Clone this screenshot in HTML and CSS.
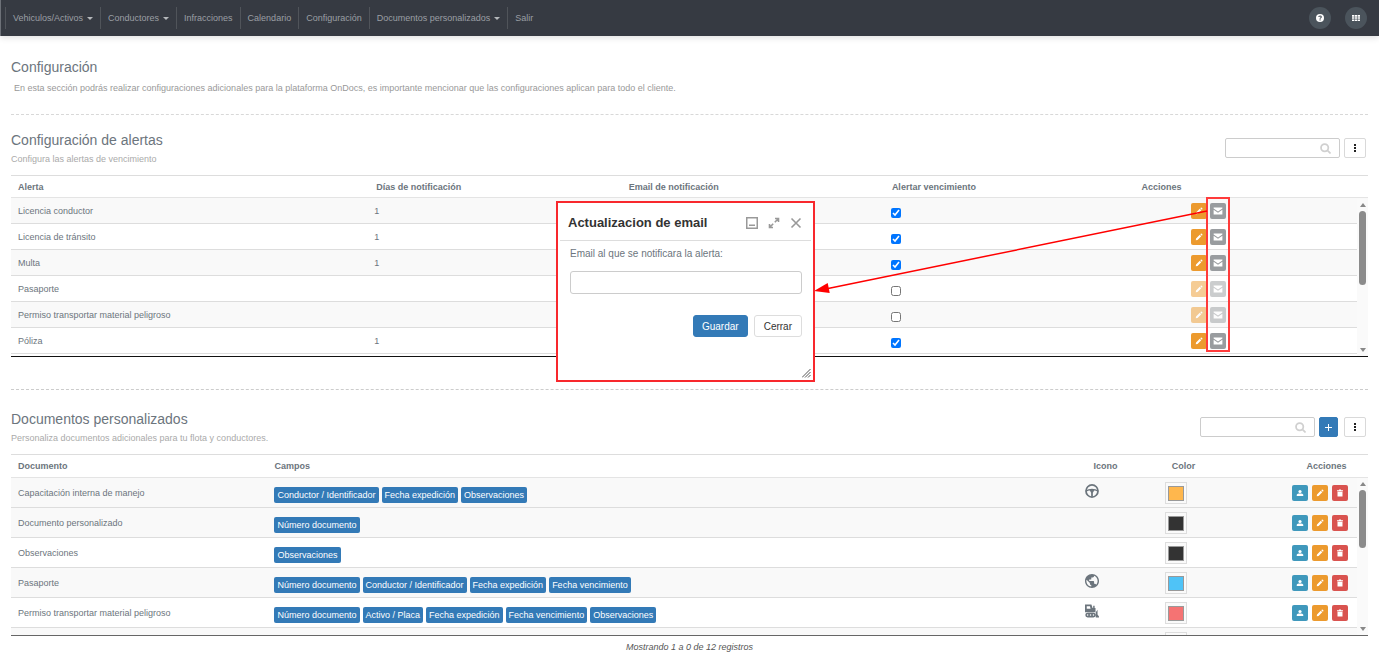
FILE: index.html
```html
<!DOCTYPE html>
<html lang="es">
<head>
  <meta charset="UTF-8">
  <meta name="viewport" content="width=device-width, initial-scale=1.0">
  <title>Configuración</title>
  <link rel="stylesheet" href="styles.css">
</head>
<body>

  <!-- Icons -->
  <svg class="sprite" aria-hidden="true">
    <symbol id="i-pencil" viewBox="0 0 16 16"><path d="M1.500 14.500l.6-3.600 7.400-7.400 3 3-7.400 7.400zM10.600 2.400l1-1c.5-.5 1.200-.5 1.700 0l1.300 1.300c.5.5.5 1.200 0 1.700l-1 1z"/></symbol>
    <symbol id="i-mail" viewBox="0 0 16 16"><path d="M1 2.500h14v1.600L8 8.800 1 4.100zM1 6l7 4.600L15 6v7.500H1z"/></symbol>
    <symbol id="i-user" viewBox="0 0 16 16"><circle cx="8" cy="5" r="3.200"/><path d="M1.500 14v-2.500C1.500 9.500 5 9 8 9s6.500.5 6.500 2.500V14z"/></symbol>
    <symbol id="i-trash" viewBox="0 0 16 16"><path d="M2 2.500h3.500l.6-1.300h3.800l.6 1.300H14v2.200H2zM3 5.500h10V15H3z"/></symbol>
    <symbol id="i-dots" viewBox="0 0 8 8"><rect x="3" y="0" width="2" height="2"/><rect x="3" y="3" width="2" height="2"/><rect x="3" y="6" width="2" height="2"/></symbol>
    <symbol id="i-search" viewBox="0 0 16 16"><path d="M6.800 1.500a5.300 5.300 0 1 0 0 10.600 5.300 5.300 0 0 0 0-10.600zM10.700 10.700l3.800 3.800" fill="none" stroke="currentColor" stroke-width="2.600" stroke-linecap="round"/></symbol>
    <symbol id="i-wheel" viewBox="0 0 24 24"><circle cx="12" cy="12" r="10.300" fill="none" stroke="currentColor" stroke-width="3"/><path d="M2 12c5-3.600 15-3.600 20 0" fill="none" stroke="currentColor" stroke-width="2.600"/><path d="M7.500 10h9l-3 5v7h-3v-7z"/></symbol>
    <symbol id="i-globe" viewBox="2 2 20 20"><path d="M12 2C6.480 2 2 6.480 2 12s4.480 10 10 10 10-4.480 10-10S17.520 2 12 2zm-1 17.930c-3.950-.49-7-3.850-7-7.930 0-.62.08-1.210.21-1.790L9 15v1c0 1.100.9 2 2 2v1.930zm6.900-2.540c-.26-.81-1-1.390-1.900-1.390h-1v-3c0-.55-.45-1-1-1H8v-2h2c.55 0 1-.45 1-1V7h2c1.100 0 2-.9 2-2v-.41c2.930 1.190 5 4.060 5 7.410 0 2.080-.8 3.970-2.100 5.390z"/></symbol>
    <symbol id="i-dozer" viewBox="0 0 24 24"><path fill-rule="evenodd" d="M0 1h11l2 6h1V3h2.500v4H18v7H0zM3 4v4h6.500L8.500 4zM18.500 14l3-4v8l2.500 3.500V23h-5.500zM4.500 15h10a4 4 0 0 1 0 8h-10a4 4 0 0 1 0-8zm0 2.700a1.300 1.300 0 1 0 0 2.600 1.300 1.300 0 0 0 0-2.600zm5 0a1.300 1.300 0 1 0 0 2.600 1.300 1.300 0 0 0 0-2.600zm5 0a1.300 1.300 0 1 0 0 2.600 1.300 1.300 0 0 0 0-2.600z"/></symbol>
  </svg>

  <header class="topbar">
    <nav class="menu">
      <a href="#" class="caret">Vehiculos/Activos</a>
      <a href="#" class="caret">Conductores</a>
      <a href="#">Infracciones</a>
      <a href="#">Calendario</a>
      <a href="#">Configuración</a>
      <a href="#" class="caret">Documentos personalizados</a>
      <a href="#">Salir</a>
    </nav>
    <div class="top-actions">
      <button type="button" class="round-btn" aria-label="Ayuda">
        <svg viewBox="0 0 16 16"><circle cx="8" cy="8" r="8"/><path d="M5.500 6.200C5.600 3 10.600 3.200 10.500 6c0 1.700-2.300 1.800-2.300 3.400" fill="none" stroke="#4b545c" stroke-width="2.200"/><rect x="7" y="10.700" width="2.300" height="2.200" fill="#4b545c"/></svg>
      </button>
      <button type="button" class="round-btn" aria-label="Aplicaciones">
        <svg viewBox="0 0 16 16"><path d="M0 2h4.600v3.300H0zM5.700 2h4.600v3.300H5.700zM11.400 2H16v3.300h-4.600zM0 6.400h4.600v3.300H0zM5.700 6.400h4.600v3.300H5.700zM11.400 6.400H16v3.300h-4.600zM0 10.800h4.600v3.300H0zM5.700 10.800h4.600v3.300H5.700zM11.400 10.800H16v3.300h-4.600z"/></svg>
      </button>
    </div>
  </header>

  <main>
    <section class="intro">
      <h1>Configuración</h1>
      <p>En esta sección podrás realizar configuraciones adicionales para la plataforma OnDocs, es importante mencionar que las configuraciones aplican para todo el cliente.</p>
    </section>

    <!-- Alerts -->
    <section class="panel alerts">
      <div class="panel-head">
        <div>
          <h2>Configuración de alertas</h2>
          <p>Configura las alertas de vencimiento</p>
        </div>
        <div class="toolbar">
          <div class="search">
            <input type="text" aria-label="Buscar alerta">
            <svg><use href="#i-search"/></svg>
          </div>
          <button type="button" class="more-btn" aria-label="Opciones"><svg><use href="#i-dots"/></svg></button>
        </div>
      </div>

      <div class="table-wrap">
        <table class="alerts-table">
          <thead>
            <tr>
              <th class="c-alert">Alerta</th>
              <th class="c-days">Días de notificación</th>
              <th class="c-email">Email de notificación</th>
              <th class="c-check">Alertar vencimiento</th>
              <th>Acciones</th>
            </tr>
          </thead>
          <tbody>
            <tr>
              <td>Licencia conductor</td><td>1</td><td></td>
              <td><input type="checkbox" aria-label="Alertar Licencia conductor" checked></td>
              <td><div class="actions"><button type="button" class="btn-icon orange" aria-label="Editar"><svg><use href="#i-pencil"/></svg></button><button type="button" class="btn-icon gray" aria-label="Email"><svg><use href="#i-mail"/></svg></button></div></td>
            </tr>
            <tr>
              <td>Licencia de tránsito</td><td>1</td><td></td>
              <td><input type="checkbox" aria-label="Alertar Licencia de tránsito" checked></td>
              <td><div class="actions"><button type="button" class="btn-icon orange" aria-label="Editar"><svg><use href="#i-pencil"/></svg></button><button type="button" class="btn-icon gray" aria-label="Email"><svg><use href="#i-mail"/></svg></button></div></td>
            </tr>
            <tr>
              <td>Multa</td><td>1</td><td></td>
              <td><input type="checkbox" aria-label="Alertar Multa" checked></td>
              <td><div class="actions"><button type="button" class="btn-icon orange" aria-label="Editar"><svg><use href="#i-pencil"/></svg></button><button type="button" class="btn-icon gray" aria-label="Email"><svg><use href="#i-mail"/></svg></button></div></td>
            </tr>
            <tr>
              <td>Pasaporte</td><td></td><td></td>
              <td><input type="checkbox" aria-label="Alertar Pasaporte"></td>
              <td><div class="actions"><button type="button" class="btn-icon orange" aria-label="Editar" disabled><svg><use href="#i-pencil"/></svg></button><button type="button" class="btn-icon gray" aria-label="Email" disabled><svg><use href="#i-mail"/></svg></button></div></td>
            </tr>
            <tr>
              <td>Permiso transportar material peligroso</td><td></td><td></td>
              <td><input type="checkbox" aria-label="Alertar Permiso transportar material peligroso"></td>
              <td><div class="actions"><button type="button" class="btn-icon orange" aria-label="Editar" disabled><svg><use href="#i-pencil"/></svg></button><button type="button" class="btn-icon gray" aria-label="Email" disabled><svg><use href="#i-mail"/></svg></button></div></td>
            </tr>
            <tr>
              <td>Póliza</td><td>1</td><td></td>
              <td><input type="checkbox" aria-label="Alertar Póliza" checked></td>
              <td><div class="actions"><button type="button" class="btn-icon orange" aria-label="Editar"><svg><use href="#i-pencil"/></svg></button><button type="button" class="btn-icon gray" aria-label="Email"><svg><use href="#i-mail"/></svg></button></div></td>
            </tr>
          </tbody>
        </table>
        <div class="scrollbar"><span class="thumb"></span></div>
      </div>

      <!-- Highlight of the email buttons -->
      <div class="highlight"></div>
      <svg class="arrow" viewBox="0 0 394 90" aria-hidden="true">
        <path d="M393 6L14 83.500" stroke="#f00" stroke-width="1.500"/>
        <path d="M0 86l13.700-8 2 10z" fill="#f00"/>
      </svg>

      <form class="modal">
        <div class="modal-head">
          <h3>Actualizacion de email</h3>
          <button type="button" class="win-btn" aria-label="Minimizar"><svg viewBox="0 0 12 12"><path d="M.7.7h10.600v10.600H.7zM3 8.300h6"/></svg></button>
          <button type="button" class="win-btn" aria-label="Maximizar"><svg viewBox="0 0 12 12"><path d="M7 1.500h3.500V5M5 10.500H1.500V7M10.500 1.500L6.800 5.200M1.500 10.500l3.700-3.700"/></svg></button>
          <button type="button" class="win-btn" aria-label="Cerrar ventana"><svg viewBox="0 0 12 12"><path d="M1.500 1.500l9 9M10.500 1.500l-9 9"/></svg></button>
        </div>
        <div class="modal-body">
          <label for="email">Email al que se notificara la alerta:</label>
          <input type="text" id="email">
          <div class="modal-buttons">
            <button type="button" class="btn primary">Guardar</button>
            <button type="button" class="btn">Cerrar</button>
          </div>
        </div>
        <svg class="grip" viewBox="0 0 9 9"><path d="M0 8.500L8.500 0M3 8.500L8.500 3M6 8.500L8.500 6"/></svg>
      </form>
    </section>

    <!-- Custom documents -->
    <section class="panel documents">
      <div class="panel-head">
        <div>
          <h2>Documentos personalizados</h2>
          <p>Personaliza documentos adicionales para tu flota y conductores.</p>
        </div>
        <div class="toolbar">
          <div class="search">
            <input type="text" aria-label="Buscar documento">
            <svg><use href="#i-search"/></svg>
          </div>
          <button type="button" class="add-btn" aria-label="Agregar"><svg viewBox="0 0 7 7"><path d="M3 0h1v3h3v1H4v3H3V4H0V3h3z"/></svg></button>
          <button type="button" class="more-btn" aria-label="Opciones"><svg><use href="#i-dots"/></svg></button>
        </div>
      </div>

      <div class="table-wrap">
        <table class="docs-table">
          <thead>
            <tr>
              <th class="c-doc">Documento</th>
              <th class="c-fields">Campos</th>
              <th class="c-icon">Icono</th>
              <th class="c-color">Color</th>
              <th class="c-actions">Acciones</th>
            </tr>
          </thead>
          <tbody>
            <tr>
              <td>Capacitación interna de manejo</td>
              <td><div class="tags"><span>Conductor / Identificador</span><span>Fecha expedición</span><span>Observaciones</span></div></td>
              <td><svg class="doc-icon"><use href="#i-wheel"/></svg></td>
              <td><div class="swatch amber"></div></td>
              <td><div class="actions"><button type="button" class="btn-icon teal" aria-label="Asignar"><svg><use href="#i-user"/></svg></button><button type="button" class="btn-icon orange" aria-label="Editar"><svg><use href="#i-pencil"/></svg></button><button type="button" class="btn-icon red" aria-label="Eliminar"><svg><use href="#i-trash"/></svg></button></div></td>
            </tr>
            <tr>
              <td>Documento personalizado</td>
              <td><div class="tags"><span>Número documento</span></div></td>
              <td></td>
              <td><div class="swatch dark"></div></td>
              <td><div class="actions"><button type="button" class="btn-icon teal" aria-label="Asignar"><svg><use href="#i-user"/></svg></button><button type="button" class="btn-icon orange" aria-label="Editar"><svg><use href="#i-pencil"/></svg></button><button type="button" class="btn-icon red" aria-label="Eliminar"><svg><use href="#i-trash"/></svg></button></div></td>
            </tr>
            <tr>
              <td>Observaciones</td>
              <td><div class="tags"><span>Observaciones</span></div></td>
              <td></td>
              <td><div class="swatch dark"></div></td>
              <td><div class="actions"><button type="button" class="btn-icon teal" aria-label="Asignar"><svg><use href="#i-user"/></svg></button><button type="button" class="btn-icon orange" aria-label="Editar"><svg><use href="#i-pencil"/></svg></button><button type="button" class="btn-icon red" aria-label="Eliminar"><svg><use href="#i-trash"/></svg></button></div></td>
            </tr>
            <tr>
              <td>Pasaporte</td>
              <td><div class="tags"><span>Número documento</span><span>Conductor / Identificador</span><span>Fecha expedición</span><span>Fecha vencimiento</span></div></td>
              <td><svg class="doc-icon"><use href="#i-globe"/></svg></td>
              <td><div class="swatch sky"></div></td>
              <td><div class="actions"><button type="button" class="btn-icon teal" aria-label="Asignar"><svg><use href="#i-user"/></svg></button><button type="button" class="btn-icon orange" aria-label="Editar"><svg><use href="#i-pencil"/></svg></button><button type="button" class="btn-icon red" aria-label="Eliminar"><svg><use href="#i-trash"/></svg></button></div></td>
            </tr>
            <tr>
              <td>Permiso transportar material peligroso</td>
              <td><div class="tags"><span>Número documento</span><span>Activo / Placa</span><span>Fecha expedición</span><span>Fecha vencimiento</span><span>Observaciones</span></div></td>
              <td><svg class="doc-icon"><use href="#i-dozer"/></svg></td>
              <td><div class="swatch coral"></div></td>
              <td><div class="actions"><button type="button" class="btn-icon teal" aria-label="Asignar"><svg><use href="#i-user"/></svg></button><button type="button" class="btn-icon orange" aria-label="Editar"><svg><use href="#i-pencil"/></svg></button><button type="button" class="btn-icon red" aria-label="Eliminar"><svg><use href="#i-trash"/></svg></button></div></td>
            </tr>
            <tr>
              <td></td><td></td><td></td>
              <td><div class="swatch"></div></td>
              <td></td>
            </tr>
          </tbody>
        </table>
        <div class="scrollbar"><span class="thumb short"></span></div>
      </div>
      <p class="count">Mostrando 1 a 0 de 12 registros</p>
    </section>
  </main>

</body>
</html>
```
FILE: styles.css
```css
* {
  box-sizing: border-box;
}

body {
  margin: 0;
  font-family: "Liberation Sans", Arial, sans-serif;
  font-size: 9px;
  line-height: 14px;
  color: #6c757d;
  background-color: #fff;
}

h1, h2, h3, p {
  margin: 0;
}

button, input {
  font-family: inherit;
  margin: 0;
  padding: 0;
}

svg {
  display: block;
  fill: currentColor;
}

.sprite {
  display: none;
}

/* Top bar */
.topbar {
  display: flex;
  justify-content: space-between;
  align-items: center;
  height: 36px;
  padding: 0 12px 0 4px;
  background-color: #363a42;
  border-left: 1px solid #6d7178;
  box-shadow: 0 2px 6px rgba(0, 0, 0, 0.12);
}

.menu {
  display: flex;
}

.menu a {
  display: flex;
  align-items: center;
  height: 22px;
  padding: 0 7px;
  border-left: 1px solid #50545a;
  color: #9b9fa4;
  text-decoration: none;
}

.caret::after {
  content: "";
  margin-left: 4px;
  border: 3px solid transparent;
  border-top-color: #b5b8bb;
  border-bottom: 0;
}

.top-actions {
  display: flex;
  gap: 14px;
}

.round-btn {
  display: flex;
  align-items: center;
  justify-content: center;
  width: 22px;
  height: 22px;
  border: 0;
  border-radius: 50%;
  background-color: #4b545c;
  color: #fff;
}

.round-btn svg {
  width: 8px;
  height: 8px;
}

/* Sections */
main {
  padding: 0 11px;
}

h1, h2 {
  font-size: 14px;
  line-height: 18px;
  font-weight: normal;
}

.intro {
  padding: 22px 0 19px;
  border-bottom: 1px dashed #d8d8d8;
}

.intro p {
  margin-top: 5px;
  padding-left: 3px;
  color: #999;
}

.panel {
  position: relative;
  padding-top: 16px;
}

.alerts {
  padding-bottom: 32px;
  border-bottom: 1px dashed #ccc;
}

.documents {
  padding-top: 20px;
}

.panel-head {
  display: flex;
  justify-content: space-between;
  align-items: flex-end;
  margin-bottom: 9px;
}

.panel-head p {
  margin-top: 3px;
  color: #aaa;
}

.toolbar {
  display: flex;
  gap: 4px;
  padding: 0 2px 8px 0;
}

.search {
  position: relative;
}

.search input {
  display: block;
  width: 115px;
  height: 20px;
  padding: 0 24px 0 6px;
  border: 1px solid #ccc;
  border-radius: 2px;
}

.search svg {
  position: absolute;
  top: 5px;
  right: 9px;
  width: 11px;
  height: 11px;
  color: #d0d0d0;
}

.more-btn, .add-btn {
  display: flex;
  align-items: center;
  justify-content: center;
  width: 22px;
  height: 20px;
  border: 1px solid #d9d9d9;
  border-radius: 2px;
  background-color: #fff;
  color: #222;
}

.more-btn svg {
  width: 8px;
  height: 8px;
}

.add-btn {
  width: 19px;
  margin-right: 2px;
  border-color: #337ab7;
  background-color: #337ab7;
  color: #fff;
}

.add-btn svg {
  width: 7px;
  height: 7px;
}

/* Tables */
.table-wrap {
  position: relative;
  height: 182px;
  overflow: hidden;
  border-top: 1px solid #ddd;
  border-bottom: 1px solid #111;
}

.documents .table-wrap {
  border-bottom-color: #666;
}

table {
  width: 100%;
  table-layout: fixed;
  border-collapse: separate;
  border-spacing: 0;
}

th, td {
  height: 26px;
  padding: 0 7px;
  text-align: left;
  border-bottom: 1px solid #ddd;
}

th {
  height: 22px;
  font-weight: bold;
  border-bottom-color: #e4e4e4;
}

.alerts-table tbody tr:nth-child(odd),
.docs-table tbody tr:nth-child(even),
.docs-table tbody tr:first-child {
  background-color: #f9f9f9;
}

.c-alert { width: 26.4%; }
.c-days { width: 18.6%; }
.c-email { width: 19.4%; }
.c-check { width: 18.4%; }

.c-doc { width: 18.9%; }
.c-fields { width: 59.7%; }
.c-icon { width: 5.9%; }
.c-color { width: 9.4%; }

.docs-table th {
  height: 23px;
}

.docs-table td {
  height: 30px;
}

.docs-table .c-icon {
  padding-left: 16px;
}

.docs-table .c-color {
  padding-left: 14px;
}

.docs-table .c-actions {
  padding: 0;
  text-align: center;
}

.alerts-table td:nth-child(2) {
  padding-left: 5px;
}

.alerts-table td:nth-child(4) {
  padding-left: 6px;
}

input[type="checkbox"] {
  display: block;
  width: 10px;
  height: 10px;
  margin-top: 5px;
}

.actions {
  display: flex;
  gap: 4px;
}

.alerts-table .actions {
  gap: 3px;
  padding-left: 49px;
}

.btn-icon {
  display: flex;
  align-items: center;
  justify-content: center;
  width: 16px;
  height: 16px;
  border: 0;
  border-radius: 2px;
  color: #fff;
}

.btn-icon svg {
  width: 8px;
  height: 8px;
}

.gray svg {
  width: 10px;
  height: 10px;
}

.btn-icon:disabled {
  opacity: 0.5;
}

.orange { background-color: #ec9a2e; }
.gray { background-color: #999c9f; }
.teal { background-color: #3f98bc; }
.red { background-color: #d9534f; }

.tags {
  display: flex;
  gap: 3px;
  padding-top: 4px;
}

.tags span {
  padding: 1px 3px;
  border-radius: 2px;
  background-color: #337ab7;
  color: #fff;
  white-space: nowrap;
}

.doc-icon {
  width: 14px;
  height: 14px;
  margin-bottom: 3px;
}

.swatch {
  width: 22px;
  height: 22px;
  padding: 3px 2px;
  border: 1px solid #ddd;
  background-color: #fafafa;
}

.swatch::before {
  content: "";
  display: block;
  height: 13px;
  border: 1px solid #999;
}

.amber::before { background-color: #ffb74d; }
.dark::before { background-color: #333; }
.sky::before { background-color: #4fc3f7; }
.coral::before { background-color: #f57373; }

.scrollbar {
  position: absolute;
  top: 23px;
  right: 0;
  bottom: 0;
  display: flex;
  flex-direction: column;
  align-items: center;
  width: 11px;
  padding: 4px 0;
  background-color: #fafafa;
}

.scrollbar::before, .scrollbar::after {
  content: "";
  border: 3px solid transparent;
}

.scrollbar::before {
  border-top: 0;
  border-bottom: 4px solid #888;
}

.scrollbar::after {
  margin-top: auto;
  border-bottom: 0;
  border-top: 4px solid #888;
}

.thumb {
  width: 7px;
  height: 74px;
  margin-top: 4px;
  border-radius: 4px;
  background-color: #8b8b8b;
}

.thumb.short {
  height: 58px;
}

.count {
  margin-top: 4px;
  font-style: italic;
  text-align: center;
  color: #555;
}

/* Email window */
.highlight {
  position: absolute;
  top: 82px;
  right: 138px;
  width: 24px;
  height: 155px;
  border: 2px solid #ff3b3b;
}

.arrow {
  position: absolute;
  top: 90px;
  right: 160px;
  width: 394px;
  height: 90px;
}

.modal {
  position: absolute;
  top: 86px;
  right: 553px;
  width: 259px;
  height: 181px;
  padding: 0 2px;
  border: 2px solid #f8282d;
  background-color: #fff;
  font-size: 10px;
}

.modal-head {
  display: flex;
  align-items: center;
  gap: 10px;
  height: 38px;
  padding: 2px 9px 0 8px;
  border-bottom: 1px solid #ddd;
}

.modal-head h3 {
  flex: 1;
  font-size: 13px;
  color: #333;
}

.win-btn {
  border: 0;
  background: none;
  color: #999;
}

.win-btn svg {
  width: 12px;
  height: 12px;
  fill: none;
  stroke: currentColor;
  stroke-width: 1.6;
}

.modal-body {
  padding: 6px 9px 0 10px;
}

.modal-body label {
  display: block;
}

.modal-body input {
  display: block;
  width: 100%;
  height: 23px;
  margin: 10px 0 21px;
  padding: 0 6px;
  border: 1px solid #ccc;
  border-radius: 3px;
}

.modal-buttons {
  display: flex;
  justify-content: flex-end;
  gap: 6px;
}

.btn {
  height: 22px;
  padding: 0 9px;
  border: 1px solid #ddd;
  border-radius: 3px;
  background-color: #fff;
  color: #333;
  font-size: 10px;
}

.btn.primary {
  padding: 0 8px;
  border-color: #337ab7;
  background-color: #337ab7;
  color: #fff;
}

.grip {
  position: absolute;
  right: 2px;
  bottom: 2px;
  width: 9px;
  height: 9px;
  stroke: #555;
}
```
